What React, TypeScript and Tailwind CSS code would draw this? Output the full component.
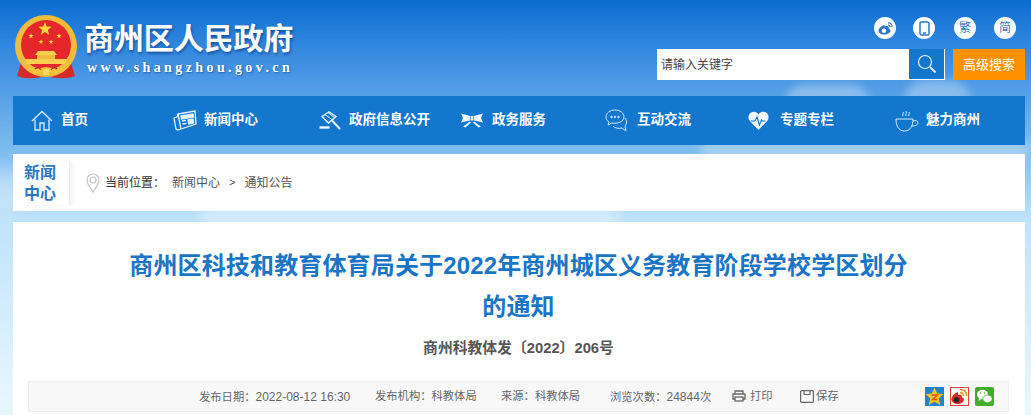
import type { ReactNode } from "react";

const cjk = "font-['Liberation_Sans','Noto_Sans_CJK_SC',sans-serif]";

function Star({ x, y, r }: { x: number; y: number; r: number }) {
  const pts = [...Array(10)]
    .map((_, i) => {
      const a = -Math.PI / 2 + (i * Math.PI) / 5;
      const d = i % 2 ? r * 0.42 : r;
      return `${x + d * Math.cos(a)},${y + d * Math.sin(a)}`;
    })
    .join(" ");
  return <polygon points={pts} fill="#ffd83a" />;
}

function Emblem() {
  return (
    <svg width="64" height="64" viewBox="0 0 64 64">
      <path d="M7 48 3 61c8 3 17 3 29 0 12 3 21 3 29 0l-4-13z" fill="#d92a2a" />
      <circle cx="32" cy="31" r="31" fill="#f0bd3a" />
      <circle cx="32" cy="30" r="25" fill="#e5262b" />
      <Star x={31} y={14} r={7} />
      <Star x={17} y={21} r={2.8} />
      <Star x={45} y={21} r={2.8} />
      <Star x={27} y={27} r={2.6} />
      <Star x={37} y={27} r={2.6} />
      <path d="M24 36h16l3 4H21z" fill="#f8cf4e" />
      <path d="M23 40h18v4H23z" fill="#f0bd3a" />
      <path d="M11 44h42l-2 5H13z" fill="#f8cf4e" />
      <path d="M11 51c5 4 13 2 21 1 8 1 16 3 21-1-1 5-6 8-12 7-4-1-6-2-9-1-3-1-5 0-9 1-6 1-11-2-12-7z" fill="#f4c23c" />
      <path d="M29 54h6v6h-6z" fill="#f8d860" />
      <path d="M21 54c2-2 5-1 6 1M43 54c-2-2-5-1-6 1" fill="none" stroke="#c8242a" strokeWidth="1.200" />
    </svg>
  );
}

function HomeIcon() {
  return (
    <svg width="22" height="22" viewBox="0 0 22 22" fill="none" stroke="#d8ecfb" strokeWidth="1.3">
      <path d="M1 11 11 1.500 21 11" />
      <path d="M4 9.500V20h5v-7h4v7h5V9.500" />
    </svg>
  );
}

function NewsIcon() {
  return (
    <svg width="24" height="22" viewBox="0 0 24 22" fill="none" stroke="#e6f3fd" strokeWidth="1.3">
      <path d="m5 4 17-3 1 13-15 5-3 1-2-1-2-11 3-1z" />
      <path d="M5 4 8 19" />
      <path d="m8 6 12-2 .5 3-12 2z" fill="#e6f3fd" />
      <path d="m15 10 5-1 .6 4-5 1z" fill="#e6f3fd" />
      <path d="m9 11 4-.6M9.500 14l4-.6" />
    </svg>
  );
}

function GavelIcon() {
  return (
    <svg width="23" height="20" viewBox="0 0 23 20" fill="none" stroke="#eef6fd" strokeWidth="1.300">
      <path d="M4 5.500 11 .8 18 5.500 10.500 12z" />
      <path d="M7 3.500 14.500 9M10 1.500 17 7" strokeWidth="1" />
      <path d="m14 9.500 8 8.500" strokeWidth="2" />
      <path d="M1.500 16.500h10" strokeWidth="2.400" />
    </svg>
  );
}

function BowIcon() {
  return (
    <svg width="22" height="15" viewBox="0 0 22 15" fill="#f2f8fd">
      <path d="M0 .5 9 3v4.500L0 9.500l2-4.500z" />
      <path d="M22 .5 13 3v4.500l9 2-2-4.500z" />
      <path d="M9.600 3h2.800v4.500H9.600z" />
      <path d="M9 8.500 2 13.500 4.500 14.500l5.500-5zM13 8.500l7 5-2.500 1-5.500-5z" />
    </svg>
  );
}

function ChatIcon() {
  return (
    <svg width="23" height="24" viewBox="0 0 23 24" fill="none" stroke="#cfe6f8" strokeWidth="1">
      <path d="M10 1C5 1 1 4 1 8c0 2 1 4 3 5l-1 3 4-2c5 1 12-1 12-6 0-4-4-7-9-7z" />
      <path d="M20 9c2 2 2 6 0 8l1 5-4-3c-4 1-7 0-9-2" />
      <circle cx="6.500" cy="8" r=".8" fill="#cfe6f8" />
      <circle cx="10" cy="8" r=".8" fill="#cfe6f8" />
      <circle cx="13.500" cy="8" r=".8" fill="#cfe6f8" />
    </svg>
  );
}

function HeartIcon() {
  return (
    <svg width="21" height="20" viewBox="0 0 21 20">
      <path d="M10.500 19 1.800 10C-.5 7.500.3 3 3 1.500c2.800-1.500 6-.5 7.500 2 1.500-2.500 4.700-3.500 7.500-2 2.700 1.500 3.500 6 1.200 8.500z" fill="#f4f9fd" />
      <path d="M3 10h4l2-4 2.500 8 2-5 1 1h3" fill="none" stroke="#1477ce" strokeWidth="1.100" />
    </svg>
  );
}

function CupIcon() {
  return (
    <svg width="24" height="22" viewBox="0 0 24 22" fill="none" stroke="#d8ecfb" strokeWidth="1">
      <path d="M1 9h17c0 6-2 12-8.500 12S1 15 1 9z" />
      <path d="M18 11c3-1 5 0 5 2s-3 3-6 3" />
      <path d="M8 6c-1-2 1-2 0-4M11 6c-1-2 1-3 0-5M14 6c-1-2 1-2 0-4" />
    </svg>
  );
}

const navItems: { label: string; icon: ReactNode; cls: string; gap: string }[] = [
  { label: "首页", icon: <HomeIcon />, cls: "w-[142px]", gap: "gap-2" },
  { label: "新闻中心", icon: <NewsIcon />, cls: "w-[145px]", gap: "gap-[7px]" },
  { label: "政府信息公开", icon: <GavelIcon />, cls: "w-[143px]", gap: "gap-2" },
  { label: "政务服务", icon: <BowIcon />, cls: "w-[144px]", gap: "gap-[9px]" },
  { label: "互动交流", icon: <ChatIcon />, cls: "w-[143px]", gap: "gap-[9px]" },
  { label: "专题专栏", icon: <HeartIcon />, cls: "w-[147px]", gap: "gap-[11px]" },
  { label: "魅力商州", icon: <CupIcon />, cls: "w-[110px]", gap: "gap-[7px]" },
];

function Round({ children }: { children: ReactNode }) {
  return (
    <div className="w-[22px] h-[22px] rounded-full bg-white flex items-center justify-center text-[12px] leading-none text-[#2a78c4]">
      {children}
    </div>
  );
}

function Clouds() {
  return (
    <div className="absolute inset-0 overflow-hidden">
      <div className="absolute left-[785px] top-[84px] w-[85px] h-[40px] rounded-full bg-white/30 blur-[4px]" />
      <div className="absolute left-[905px] top-[80px] w-[65px] h-[40px] rounded-full bg-white/30 blur-[4px]" />
      <div className="absolute left-[-40px] top-[170px] w-[70px] h-[40px] rounded-full bg-white/30 blur-[8px]" />
      <div className="absolute left-[700px] top-[140px] w-[330px] h-[20px] rounded-full bg-white/30 blur-[6px]" />
      <div className="absolute left-[200px] top-[205px] w-[420px] h-[22px] rounded-full bg-white/30 blur-[6px]" />
    </div>
  );
}

export default function App() {
  return (
    <div className={`${cjk} relative w-[1031px] h-[415px] overflow-hidden bg-[linear-gradient(180deg,#0b6cd0_0px,#2c84de_40px,#549ee6_90px,#7dbcee_150px,#bfe3fa_220px,#e6f6ff_400px)]`}>
      <Clouds />
      <div className="relative ml-[13px] w-[1012px]">
        {/* header */}
        <div className="h-[96px] flex justify-between">
          <div className="flex pt-[15px] ml-[1px]">
            <Emblem />
            <div className="ml-[6px] pt-[6px]">
              <div className="text-[30px] leading-[36px] font-bold text-white tracking-[-0.1px] whitespace-nowrap [text-shadow:1px_2px_3px_rgba(0,40,110,0.55)]">
                商州区人民政府
              </div>
              <div className="mt-[3px] ml-[3px] text-[14px] leading-[16px] font-bold font-['Liberation_Serif',serif] tracking-[3.400px] text-white whitespace-nowrap [text-shadow:1px_1px_2px_rgba(0,40,110,0.5)]">
                www.shangzhou.gov.cn
              </div>
            </div>
          </div>
          <div className="flex flex-col items-end">
            <div className="flex mt-[17px] mr-[9px] gap-[18px]">
              <Round>
                <svg width="15" height="13" viewBox="0 0 15 13" fill="#2a78c4">
                  <path d="M6 3C3 4 .5 6.500.5 8.500c0 2.500 3 4 6 4s6-2 6-4c0-1.500-1.500-2-2-2 .5-1.500 0-2.500-1.500-2.500-1 0-2 .5-2.500.5 0-1-.2-1.500-.5-1.500z" />
                  <circle cx="6" cy="8.800" r="2.300" fill="#fff" />
                  <path d="M10 1c2.500-.5 4.500 1.500 4 4M10 3c1.300-.3 2.300.7 2 2" fill="none" stroke="#2a78c4" strokeWidth="1.100" />
                </svg>
              </Round>
              <div className="-ml-[1px] mr-[1px]">
                <Round>
                  <svg width="11" height="15" viewBox="0 0 11 15" fill="none" stroke="#2a78c4" strokeWidth="1.500">
                    <rect x="1" y="1" width="9" height="13" rx="1.500" />
                    <path d="M4 12h3" />
                  </svg>
                </Round>
              </div>
              <Round>繁</Round>
              <Round>简</Round>
            </div>
            <div className="flex mt-[10px] gap-[8px]">
              <div className="w-[288px] h-[31px] bg-white flex items-center justify-between">
                <span className="ml-[4px] text-[12px] text-[#444]">请输入关键字</span>
                <div className="w-[35px] h-[30px] self-start bg-[#1477ce] flex items-center justify-center mr-[1px]">
                  <svg width="20" height="20" viewBox="0 0 20 20" fill="none" stroke="#e2f0fb" strokeWidth="1.200">
                    <circle cx="8" cy="8" r="6.500" />
                    <path d="m13 13 5.500 5.500" strokeWidth="2" />
                  </svg>
                </div>
              </div>
              <div className="w-[72px] h-[31px] bg-[#ff9000] text-white text-[13px] flex items-center justify-center">高级搜索</div>
            </div>
          </div>
        </div>

        {/* nav */}
        <div className="h-[49px] bg-[#1477ce] flex items-center pl-[18px]">
          {navItems.map((n) => (
            <div key={n.label} className={`${n.cls} ${n.gap} flex items-center shrink-0`}>
              {n.icon}
              <span className="text-[13.500px] font-bold text-white whitespace-nowrap">{n.label}</span>
            </div>
          ))}
        </div>

        {/* breadcrumb */}
        <div className="mt-[9px] h-[57px] bg-white flex items-center">
          <div className="ml-[11px] w-[46px] text-[16px] leading-[21px] font-bold text-[#2a78c4] h-[44px] pt-[1px] border-r border-[#eee] shadow-[3px_0_4px_rgba(0,0,0,0.05)]">
            新闻
            <br />
            中心
          </div>
          <svg className="ml-[16px]" width="14" height="20" viewBox="0 0 14 20" fill="none" stroke="#c4c4c4" strokeWidth="1.200">
            <path d="M7 19C4 14 1 11 1 7a6 6 0 0 1 12 0c0 4-3 7-6 12z" />
            <circle cx="7" cy="7" r="3" />
          </svg>
          <span className="ml-[5px] w-[67px] text-[12px] text-[#333]">当前位置：</span>
          <span className="text-[12px] text-[#555]">新闻中心</span>
          <span className="ml-[9px] text-[11px] text-[#555]">&gt;</span>
          <span className="ml-[9px] text-[12px] text-[#555]">通知公告</span>
        </div>

        {/* article */}
        <div className="mt-[11px] h-[200px] bg-white pl-[15px] pr-[16px] flex flex-col">
          <h1 className="mt-[23px] mx-[95px] text-center text-[24px] leading-[41px] tracking-[0.15px] font-bold text-[#1a75c6]">
            商州区科技和教育体育局关于2022年商州城区义务教育阶段学校学区划分的通知
          </h1>
          <div className="mt-[11px] text-center text-[14.800px] leading-[20px] font-bold text-[#555]">商州科教体发〔2022〕206号</div>
          <div className="mt-[23px] h-[31px] bg-[#f8f8f8] border border-[#eee] flex items-center text-[11.300px] text-[#666] pl-[170px] whitespace-nowrap">
            <span className="w-[176px]">
              发布日期：<span className="text-[12px]">2022-08-12 16:30</span>
            </span>
            <span className="w-[126px]">发布机构：科教体局</span>
            <span className="w-[109px]">来源：科教体局</span>
            <span className="w-[122px]">
              浏览次数：<span className="text-[12px]">24844</span>次
            </span>
            <svg width="14" height="13" viewBox="0 0 14 13" fill="none" stroke="#666" strokeWidth="1.300">
              <path d="M3 4V1h8v3M3 9H1V4h12v5h-2" />
              <rect x="3" y="7" width="8" height="4" />
            </svg>
            <span className="ml-[4px] w-[50px]">打印</span>
            <svg width="14" height="13" viewBox="0 0 14 13" fill="none" stroke="#666" strokeWidth="1.200">
              <rect x=".6" y=".6" width="12.800" height="11.800" rx="1" />
              <path d="M4 1v3.500h6V1" />
            </svg>
            <span className="ml-[2px] w-[109px]">保存</span>
            <div className="flex gap-[6px]">
              <svg width="19" height="19" viewBox="0 0 19 19">
                <rect width="19" height="19" fill="#2183d0" />
                <path d="M9.500 .5l2.700 6 6.300.6-4.700 4.300 1.500 6.600-5.800-3.300-5.800 3.300 1.500-6.600L.5 7.100l6.300-.6z" fill="#f9c21c" />
                <path d="M6.500 8h6l-5 4.500h5" fill="none" stroke="#d9521f" strokeWidth="1.300" />
              </svg>
              <svg width="19" height="19" viewBox="0 0 19 19">
                <rect x=".5" y=".5" width="18" height="18" fill="#fff" stroke="#d8453b" />
                <path d="M8 5C4 6 1 10 1.500 13c.5 3 4 4.500 7.500 4 3-.5 5-2.500 5-4.500 0-1.500-1.500-2-2.200-2.300.5-1.500-.3-2.700-2-2.500l-1.800.5c.2-1.500 0-3-.0-3.200z" fill="#d8272a" />
                <circle cx="6.500" cy="13" r="2.700" fill="#222" />
                <path d="M10 2.500c4 0 6.500 2.500 6.500 6.500M10 5.500c2 0 3.500 1.500 3.500 3.500" fill="none" stroke="#f08a1d" strokeWidth="1.600" />
              </svg>
              <svg width="19" height="19" viewBox="0 0 19 19">
                <rect width="19" height="19" rx="2" fill="#3fae29" />
                <ellipse cx="7.500" cy="7.500" rx="5.500" ry="4.700" fill="#fff" />
                <path d="m4 11-.5 3 3-2z" fill="#fff" />
                <ellipse cx="12.500" cy="11.800" rx="4.700" ry="3.900" fill="#fff" stroke="#3fae29" strokeWidth=".8" />
                <circle cx="5.500" cy="6" r=".8" fill="#3fae29" />
                <circle cx="9.500" cy="6" r=".8" fill="#3fae29" />
              </svg>
            </div>
          </div>
        </div>
      </div>
    </div>
  );
}
